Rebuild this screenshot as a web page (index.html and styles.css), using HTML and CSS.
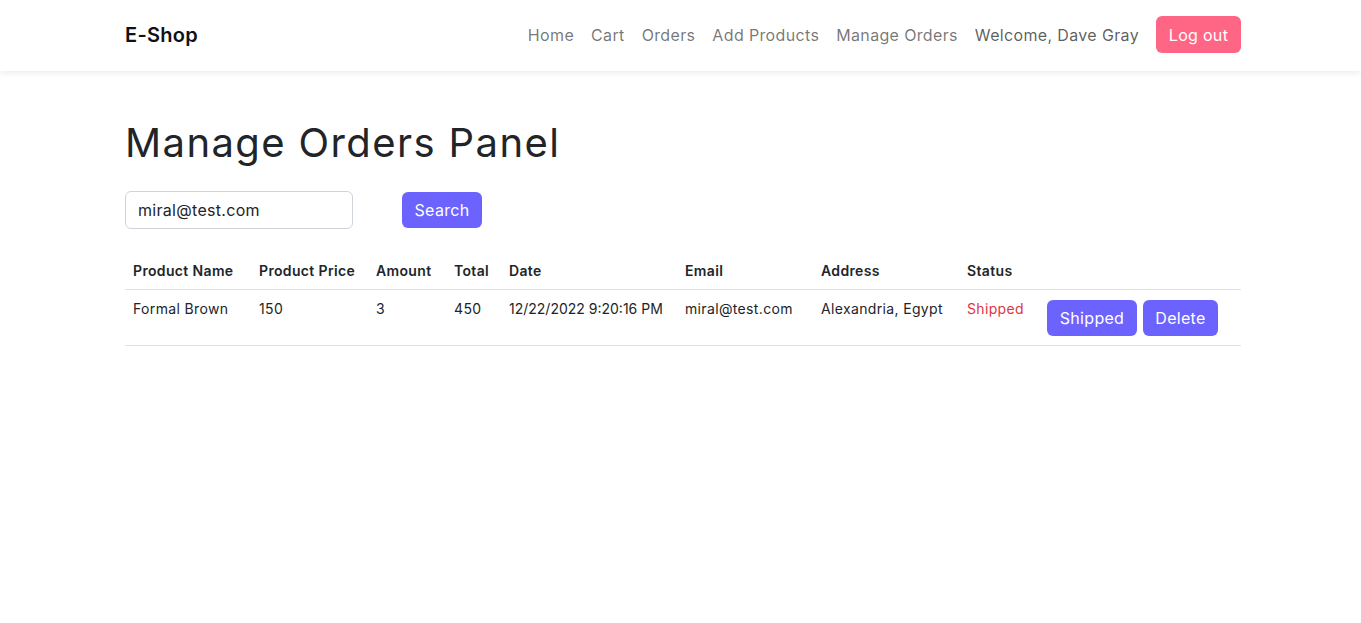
FILE: index.html
```html
<!DOCTYPE html>
<html lang="en">
<head>
<meta charset="utf-8">
<title>E-Shop</title>
<link rel="stylesheet" href="styles.css">
</head>
<body>
<header class="navbar">
  <div class="container nav-inner">
    <a class="brand" href="#">E-Shop</a>
    <nav class="nav-links">
      <a href="#">Home</a>
      <a href="#">Cart</a>
      <a href="#">Orders</a>
      <a href="#">Add Products</a>
      <a href="#">Manage Orders</a>
      <span class="welcome">Welcome, Dave Gray</span>
      <button class="btn btn-pink">Log out</button>
    </nav>
  </div>
</header>
<main class="container main">
  <h1 class="title">Manage Orders Panel</h1>
  <form class="search-row">
    <input class="search-input" type="text" value="miral@test.com">
    <button class="btn btn-purple btn-search" type="button">Search</button>
  </form>
  <table class="orders">
    <colgroup>
      <col class="c1"><col class="c2"><col class="c3"><col class="c4"><col class="c5"><col class="c6"><col class="c7"><col class="c8"><col>
    </colgroup>
    <thead>
      <tr>
        <th>Product Name</th>
        <th>Product Price</th>
        <th>Amount</th>
        <th>Total</th>
        <th>Date</th>
        <th>Email</th>
        <th>Address</th>
        <th>Status</th>
        <th></th>
      </tr>
    </thead>
    <tbody>
      <tr>
        <td>Formal Brown</td>
        <td>150</td>
        <td>3</td>
        <td>450</td>
        <td class="date">12/22/2022 9:20:16 PM</td>
        <td>miral@test.com</td>
        <td>Alexandria, Egypt</td>
        <td class="status">Shipped</td>
        <td class="actions-cell">
          <div class="actions">
            <button class="btn btn-purple btn-shipped">Shipped</button>
            <button class="btn btn-purple btn-delete">Delete</button>
          </div>
        </td>
      </tr>
    </tbody>
  </table>
</main>
</body>
</html>
```
FILE: styles.css
```css
* { box-sizing: border-box; }
body {
  margin: 0;
  font-family: "Inter", "Open Sans", sans-serif;
  color: #212529;
  background: #fff;
}
.container {
  width: 1121px;
  padding-left: 5px;
  margin: 0 auto;
}
.navbar {
  height: 71px;
  background: #fff;
  box-shadow: 0 2px 6px rgba(0,0,0,0.08);
}
.nav-inner {
  height: 100%;
  display: flex;
  align-items: center;
  justify-content: space-between;
  padding-bottom: 2px;
}
.brand {
  font-size: 20px;
  font-weight: 600;
  color: #111;
  text-decoration: none;
  letter-spacing: 0.3px;
}
.nav-links {
  display: flex;
  align-items: center;
  gap: 17px;
  font-size: 16px;
  letter-spacing: 0.35px;
}
.nav-links a {
  color: rgba(0,0,0,0.55);
  text-decoration: none;
}
.welcome {
  color: rgba(0,0,0,0.65);
}
.btn {
  font-family: inherit;
  font-size: 16px;
  border: none;
  border-radius: 6px;
  color: #fff;
  padding: 6px 0;
  line-height: 24px;
  cursor: pointer;
  letter-spacing: 0.3px;
  white-space: nowrap;
  text-align: center;
}
.btn-pink {
  background: #ff6584;
  height: 37px;
  width: 85px;
}
.btn-purple {
  background: #6c63ff;
}
.main {
  padding-top: 48px;
}
.title {
  font-size: 40px;
  font-weight: 400;
  line-height: 48px;
  margin: 0 0 24px 0;
  color: #212529;
  letter-spacing: 1.4px;
}
.search-row {
  display: flex;
  align-items: center;
  gap: 49px;
  margin-bottom: 23px;
}
.search-input {
  width: 228px;
  height: 38px;
  border: 1px solid #ced4da;
  border-radius: 6px;
  padding: 6px 12px;
  font-family: inherit;
  font-size: 16px;
  color: #212529;
  letter-spacing: 0.3px;
}
.btn-search {
  height: 36px;
  width: 80px;
}
.orders {
  width: 100%;
  border-collapse: collapse;
  table-layout: fixed;
  font-size: 14px;
  letter-spacing: 0.35px;
}
.c1 { width: 126px; }
.c2 { width: 117px; }
.c3 { width: 78px; }
.c4 { width: 55px; }
.c5 { width: 176px; }
.c6 { width: 136px; }
.c7 { width: 146px; }
.c8 { width: 80px; }
.orders th, .orders td {
  text-align: left;
  padding: 8px;
  line-height: 21px;
  border-bottom: 1px solid #dee2e6;
  vertical-align: top;
  white-space: nowrap;
}
.orders th {
  font-weight: 600;
}
.orders td {
  height: 56px;
}
.orders td.date {
  letter-spacing: 0;
}
.status {
  color: #dc3545;
}
.orders td.actions-cell {
  padding-top: 10px;
}
.actions {
  display: flex;
  gap: 6px;
}
.actions .btn {
  height: 36px;
}
.btn-shipped { width: 90px; }
.btn-delete { width: 75px; }
```
